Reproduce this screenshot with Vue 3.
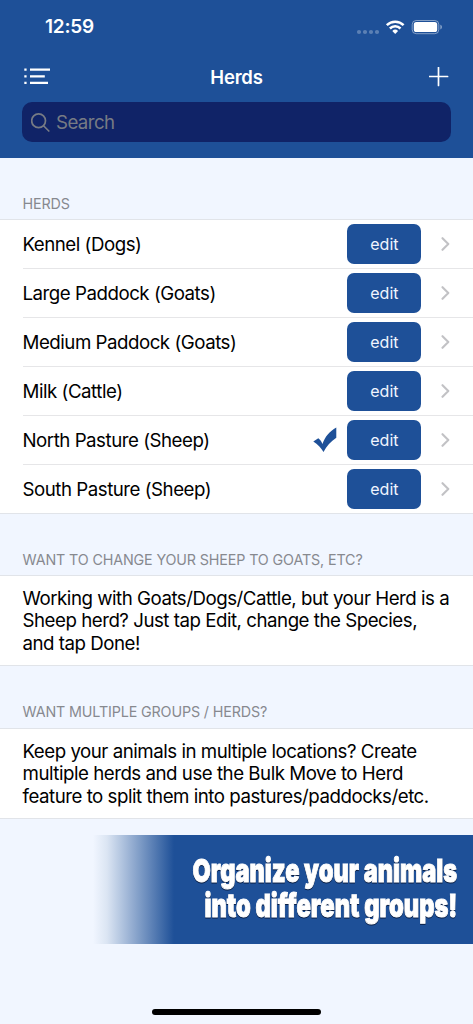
<script setup>
const herds = [
  { name: 'Kennel (Dogs)' },
  { name: 'Large Paddock (Goats)' },
  { name: 'Medium Paddock (Goats)' },
  { name: 'Milk (Cattle)' },
  { name: 'North Pasture (Sheep)', selected: true },
  { name: 'South Pasture (Sheep)' },
]
const notes = [
  {
    title: 'WANT TO CHANGE YOUR SHEEP TO GOATS, ETC?',
    lines: ['Working with Goats/Dogs/Cattle, but your Herd is a', 'Sheep herd? Just tap Edit, change the Species,', 'and tap Done!'],
  },
  {
    title: 'WANT MULTIPLE GROUPS / HERDS?',
    lines: ['Keep your animals in multiple locations? Create', 'multiple herds and use the Bulk Move to Herd', 'feature to split them into pastures/paddocks/etc.'],
  },
]
</script>

<template>
  <div class="screen">
    <header class="header">
      <div class="status">
        <span class="time">12:59</span>
        <svg class="indicators" width="88" height="18" viewBox="0 0 88 18">
          <g fill="#fff" fill-opacity=".28">
            <circle cx="4" cy="14" r="2.1" /><circle cx="10" cy="14" r="2.1" /><circle cx="16" cy="14" r="2.1" /><circle cx="22" cy="14" r="2.1" />
          </g>
          <g transform="translate(-.8 0)">
            <g fill="none" stroke="#fff" stroke-width="2.5">
              <path d="M32.6 7.1a12 12 0 0 1 16.8 0" />
              <path d="M35.7 10.5a7.6 7.6 0 0 1 10.6 0" />
            </g>
            <path d="M38.1 12.9a4.1 4.1 0 0 1 5.8 0L41 15.9z" fill="#fff" />
            <rect x="58" y="2.5" width="26.6" height="13.2" rx="4" fill="none" stroke="#fff" stroke-opacity=".45" />
            <rect x="59.6" y="4.1" width="23.4" height="10" rx="2.6" fill="#fff" />
            <path d="M86.2 6.8c2 .7 2 3.9 0 4.6z" fill="#fff" fill-opacity=".5" />
          </g>
        </svg>
      </div>
      <nav class="nav">
        <svg width="26" height="17" viewBox="0 0 26 17" fill="#fff">
          <path d="M.3 .5h2.3v2.2H.3zM.3 7.2h2.3v2.2H.3zM.3 13.7h2.3v2.2H.3zM6 .5h20v2.2H6zM6 7.2h14.8v2.2H6zM6 13.7h18v2.2H6z" />
        </svg>
        <h1 class="title">Herds</h1>
        <svg class="add" width="20" height="20" viewBox="0 0 20 20" fill="none" stroke="#fff" stroke-width="1.7" stroke-linecap="round">
          <path d="M9.5 .5v18M.6 9.5h18" />
        </svg>
      </nav>
      <div class="search">
        <svg width="19" height="19" viewBox="0 0 19 19" fill="none" stroke="#777b84" stroke-width="1.7" stroke-linecap="round">
          <circle cx="7.6" cy="7.8" r="6.9" /><path d="M12.8 13l5 5" />
        </svg>
        <span class="placeholder">Search</span>
      </div>
    </header>

    <h2 class="label first">HERDS</h2>
    <ul class="list">
      <li v-for="herd in herds" :key="herd.name" class="row">
        <span class="name">{{ herd.name }}</span>
        <svg v-if="herd.selected" class="check" width="24" height="26" viewBox="0 0 24 26">
          <path d="M.3 14.4l5-3.1c2 1.5 3.3 3.4 4.1 5.7C12 9.6 16.5 4.2 23.3.4v10.3c-5.500 3.600-9.700 8.200-12.800 14.400C8 20.600 4.800 17 .3 14.400z" fill="#1e5098" />
        </svg>
        <button class="edit">edit</button>
        <svg class="chevron" width="9" height="14" viewBox="0 0 9 14" fill="none" stroke="#c2c2c5" stroke-width="2.1" stroke-linecap="round" stroke-linejoin="round">
          <path d="M1.5 1.2L7.3 7l-5.8 5.8" />
        </svg>
      </li>
    </ul>

    <section v-for="(note, i) in notes" :key="note.title" :class="'note-' + i">
      <h2 class="label">{{ note.title }}</h2>
      <p class="note"><span v-for="line in note.lines" :key="line" class="line">{{ line }}</span></p>
    </section>

    <div class="banner">
      <svg width="380" height="109" viewBox="0 0 380 109">
        <g class="slogan">
          <text transform="translate(99.5 47) scale(.65 1)" textLength="407" lengthAdjust="spacingAndGlyphs">Organize your animals</text>
          <text transform="translate(111.5 82) scale(.65 1)" textLength="389" lengthAdjust="spacingAndGlyphs">into different groups!</text>
        </g>
      </svg>
    </div>
    <div class="home"></div>
  </div>
</template>

<style>
body { margin: 0; background: #f1f6ff; }
</style>
<style scoped>
.screen { width: 473px; height: 1024px; display: flex; flex-direction: column; overflow: hidden; background: #f1f6ff; color: #000; font-family: Inter, "Liberation Sans", sans-serif; }
.header { height: 158px; flex: none; box-sizing: border-box; padding: 0 22px; background: #1e5098; color: #fff; }
.status { height: 54px; display: flex; justify-content: space-between; padding: 0 8px 0 23px; }
.time { font-size: 19px; font-weight: 600; line-height: 54px; letter-spacing: -.2px; }
.indicators { margin-top: 18px; }
.nav { height: 45px; display: grid; grid-template-columns: 1fr auto 1fr; align-items: center; padding: 0 2px; }
.add { justify-self: end; }
.title { margin: 0; font-size: 18.5px; font-weight: 600; letter-spacing: -.2px; }
.search { height: 40px; margin: 3px 0 0; box-sizing: border-box; border-radius: 10px; background: #102367; display: flex; align-items: center; padding-left: 9px; gap: 6px; }
.placeholder { font-size: 18.7px; color: #777b84; letter-spacing: -.6px; }
.label { margin: 0; height: 61px; box-sizing: border-box; padding: 36px 22.5px 0; font-size: 14.3px; line-height: 20px; font-weight: 400; color: #87898f; white-space: nowrap; letter-spacing: -.13px; }
.list { list-style: none; margin: 0; padding: 0; height: 295px; box-sizing: border-box; background: #fff; border-top: 1px solid #e1e4e9; border-bottom: 1px solid #e1e4e9; }
.row { height: 49px; box-sizing: border-box; margin-left: 22.5px; padding-right: 23px; display: flex; align-items: center; border-bottom: 1px solid #e6e6e8; }
.row:last-child { border-bottom-color: transparent; }
.name { flex: 1; font-size: 18.7px; letter-spacing: -.48px; }
.check { margin-right: .5px; }
.edit { width: 74px; height: 40px; margin: 0 19.6px 0 10px; padding: 0; border: 0; border-radius: 7px; background: #1e5098; color: #f0f5ff; font: 400 16px Inter, sans-serif; letter-spacing: .05px; }
.note { margin: 0; height: 91px; box-sizing: border-box; padding: 12px 22.5px 0; background: #fff; border-top: 1px solid #e1e4e9; border-bottom: 1px solid #e1e4e9; font-size: 18.7px; line-height: 22.4px; letter-spacing: -.48px; white-space: nowrap; }
.line { display: block; }
.note-1 .label { height: 62px; }
.banner { width: 380px; height: 109px; flex: none; margin: 16px 0 0 93px; background: linear-gradient(90deg, #f1f6ff 0, #dbe5f3 14px, #1e5098 81px); }
.banner svg { display: block; }
.slogan { font: 900 32px Inter, sans-serif; fill: #fff; stroke: #fff; stroke-width: 1px; filter: drop-shadow(0 1.5px .7px #0a1f44); }
.home { width: 169px; height: 6px; flex: none; border-radius: 3px; background: #000; margin: 65px 0 0 152px; }
</style>
